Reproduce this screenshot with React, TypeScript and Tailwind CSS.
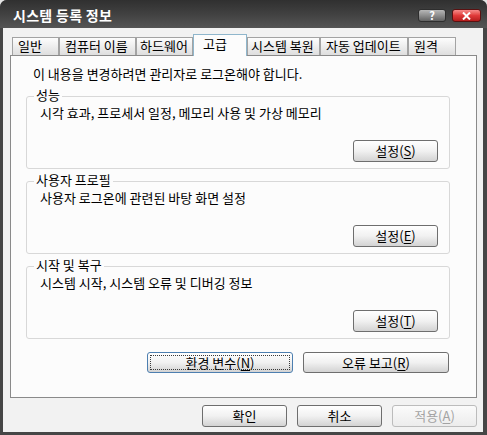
import React from "react";

const FONT = '"Noto Sans CJK KR", "Liberation Sans", sans-serif';

function Btn({
  children,
  className = "",
  disabled = false,
  focused = false,
}: {
  children: React.ReactNode;
  className?: string;
  disabled?: boolean;
  focused?: boolean;
}) {
  return (
    <div
      className={
        "relative flex items-center justify-center rounded-[3px] border text-[13px] leading-[14px] " +
        (disabled
          ? "border-[#bcbcbc] bg-gradient-to-b from-[#fbfbfb] to-[#ececec] text-[#a3a3a3] "
          : focused
          ? "border-[#4d7fb0] bg-gradient-to-b from-[#ffffff] via-[#f1f1f1] to-[#d3d3d3] text-black "
          : "border-[#6e6e6e] bg-gradient-to-b from-[#ffffff] via-[#f1f1f1] to-[#d3d3d3] text-black ") +
        className
      }
    >
      {focused && (
        <span className="absolute inset-[2px] border border-dotted border-[#3a3a3a]" />
      )}
      <span>{children}</span>
    </div>
  );
}

function U({ children }: { children: React.ReactNode }) {
  return <span className="underline underline-offset-[2px]">{children}</span>;
}

function Group({
  title,
  text,
  mnemonic,
  className = "",
}: {
  title: string;
  text: string;
  mnemonic: string;
  className?: string;
}) {
  return (
    <div
      className={
        "relative ml-[15px] w-[424px] rounded-[3px] border border-[#d8d8d8] pt-[9px] pb-[6px] " +
        className
      }
    >
      <span className="absolute left-[7px] top-[-9px] bg-[#fcfcfc] px-[2px] text-[13px] leading-[14px] text-black">
        {title}
      </span>
      <div className="pl-[13px] text-[13px] leading-[14px] text-black">
        {text}
      </div>
      <div className="mt-[20px] flex justify-end pr-[11px]">
        <Btn className="h-[22px] w-[85px]">
          설정(<U>{mnemonic}</U>)
        </Btn>
      </div>
    </div>
  );
}

const tabs = [
  { label: "일반", cls: "w-[47px] pl-[5px]" },
  { label: "컴퓨터 이름", cls: "w-[77px] pl-[5px]" },
  { label: "하드웨어", cls: "w-[57px] pl-[3px]" },
  { label: "고급", cls: "w-[54px] pl-[9px]", selected: true },
  { label: "시스템 복원", cls: "w-[73px] pl-[3px]" },
  { label: "자동 업데이트", cls: "w-[88px] pl-[5px]" },
  { label: "원격", cls: "w-[48px] pl-[5px]" },
];

export default function App() {
  return (
    <div
      className="h-[435px] w-[487px] overflow-hidden bg-[#e4e4e4]"
      style={{ fontFamily: FONT }}
    >
      <div className="flex h-full flex-col rounded-t-[7px] bg-[#464646]">
        {/* Title bar */}
        <div className="flex h-[28px] items-start rounded-t-[7px] bg-gradient-to-b from-[#303030] via-[#414141] to-[#555555] pl-[13px] pr-[6px]">
          <span className="mt-[8px] text-[14px] font-bold leading-[15px] tracking-[0.3px] text-white">
            시스템 등록 정보
          </span>
          <div className="ml-auto mt-[9px] flex gap-[6px]">
            <div className="flex h-[13px] w-[28px] items-center justify-center rounded-[3px] border border-[#2e2e2e] bg-gradient-to-b from-[#b8b8b8] via-[#8e8e8e] to-[#626262]">
              <span className="text-[11px] font-bold leading-[11px] text-white">?</span>
            </div>
            <div className="flex h-[13px] w-[29px] items-center justify-center rounded-[3px] border border-[#5a1010] bg-gradient-to-b from-[#f58a8a] via-[#e03a3a] to-[#b51c1c]">
              <svg width="9" height="8" viewBox="0 0 9 8">
                <path d="M1 0.5 L8 7.5 M8 0.5 L1 7.5" stroke="white" strokeWidth="2" />
              </svg>
            </div>
          </div>
        </div>

        {/* Body */}
        <div className="mb-[3px] ml-[3px] mr-[4px] flex flex-1 flex-col bg-[#f2f2f2] pt-[6px]">
          {/* Tabs */}
          <div className="relative z-10 mb-[-1px] ml-[9px] flex h-[22px] items-end">
            {tabs.map((t) =>
              t.selected ? (
                <div
                  key={t.label}
                  className={
                    "flex h-[22px] items-start whitespace-nowrap border-x border-t border-[#8fb6cc] bg-[#fcfcfc] pt-[2px] text-[13px] leading-[14px] text-black " +
                    t.cls
                  }
                >
                  {t.label}
                </div>
              ) : (
                <div
                  key={t.label}
                  className={
                    "mb-[1px] flex h-[18px] items-start whitespace-nowrap border-x border-t border-[#a3a3a3] bg-gradient-to-b from-[#fdfdfd] to-[#dedede] pt-[1px] text-[13px] leading-[14px] text-black " +
                    t.cls
                  }
                >
                  {t.label}
                </div>
              )
            )}
          </div>

          {/* Panel */}
          <div className="ml-[7px] mr-[6px] flex h-[343px] flex-col border border-[#8a8a8a] bg-[#fcfcfc]">
            <div className="pl-[22px] pt-[11px] text-[13px] leading-[14px] text-black">
              이 내용을 변경하려면 관리자로 로그온해야 합니다.
            </div>
            <Group
              className="mt-[15px]"
              title="성능"
              text="시각 효과, 프로세서 일정, 메모리 사용 및 가상 메모리"
              mnemonic="S"
            />
            <Group
              className="mt-[12px]"
              title="사용자 프로필"
              text="사용자 로그온에 관련된 바탕 화면 설정"
              mnemonic="E"
            />
            <Group
              className="mt-[12px]"
              title="시작 및 복구"
              text="시스템 시작, 시스템 오류 및 디버깅 정보"
              mnemonic="T"
            />
            <div className="mt-[13px] flex justify-end gap-[10px] pr-[27px]">
              <Btn className="h-[21px] w-[146px]" focused>
                환경 변수(<U>N</U>)
              </Btn>
              <Btn className="h-[21px] w-[146px]">
                오류 보고(<U>R</U>)
              </Btn>
            </div>
          </div>

          {/* Bottom buttons */}
          <div className="mr-[6px] mt-[7px] flex justify-end gap-[10px]">
            <Btn className="h-[22px] w-[85px]">확인</Btn>
            <Btn className="h-[22px] w-[85px]">취소</Btn>
            <Btn className="h-[22px] w-[85px]" disabled>
              적용(<U>A</U>)
            </Btn>
          </div>
        </div>
      </div>
    </div>
  );
}
